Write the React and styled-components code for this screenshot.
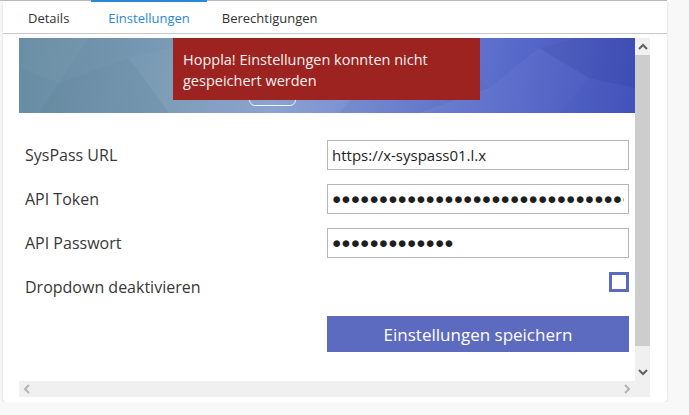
import React from 'react';
import styled, { createGlobalStyle } from 'styled-components';

const GlobalStyle = createGlobalStyle`
  html, body {
    margin: 0;
    padding: 0;
    background: #f8f8f8;
  }
  body {
    font-family: "Open Sans", "Noto Sans", "Liberation Sans", sans-serif;
    color: #333;
  }
  * {
    box-sizing: border-box;
  }
`;

const fields = [
    { label: 'SysPass URL', value: 'https://x-syspass01.l.x' },
    { label: 'API Token', value: '●'.repeat(36), masked: true },
    { label: 'API Passwort', value: '●'.repeat(13), masked: true },
];

const Chevron = ({ dir, color }) => {
    const points = {
        up: '1,6 5,2 9,6',
        down: '1,2 5,6 9,2',
        left: '6,1 2,5 6,9',
        right: '2,1 6,5 2,9',
    }[dir];
    const vertical = dir === 'up' || dir === 'down';
    return (
        <svg width={vertical ? 10 : 8} height={vertical ? 8 : 10} viewBox={vertical ? '0 0 10 8' : '0 0 8 10'}>
            <polyline points={points} fill="none" stroke={color} strokeWidth="2" />
        </svg>
    );
};

const App = () => {
    return (
        <Frame>
            <GlobalStyle />
            <Card>
                <TabBar>
                    <Tab>Details</Tab>
                    <Tab active>Einstellungen</Tab>
                    <Tab>Berechtigungen</Tab>
                </TabBar>
                <Body>
                    <ScrollFrame>
                        <Viewport>
                            <Banner>
                                <Facets viewBox="0 0 616 75" preserveAspectRatio="none">
                                    <polygon points="0,0 70,0 40,45 0,30" fill="#ffffff" opacity="0.03" />
                                    <polygon points="40,45 110,20 150,75 20,75" fill="#000000" opacity="0.02" />
                                    <polygon points="110,20 190,0 230,40 150,75" fill="#ffffff" opacity="0.035" />
                                    <polygon points="230,40 300,0 360,30 320,75 150,75" fill="#ffffff" opacity="0.03" />
                                    <polygon points="360,30 430,0 470,50 400,75 320,75" fill="#000000" opacity="0.02" />
                                    <polygon points="470,50 520,10 570,40 540,75 400,75" fill="#ffffff" opacity="0.035" />
                                    <polygon points="520,10 560,0 616,0 616,50 570,40" fill="#000000" opacity="0.03" />
                                    <polygon points="570,40 616,50 616,75 540,75" fill="#ffffff" opacity="0.02" />
                                </Facets>
                                <BannerButton />
                            </Banner>
                            <Toast>Hoppla! Einstellungen konnten nicht gespeichert werden</Toast>
                            <Form>
                                {fields.map((f) => (
                                    <React.Fragment key={f.label}>
                                        <Label>{f.label}</Label>
                                        <Input type="text" readOnly value={f.value} masked={f.masked} />
                                    </React.Fragment>
                                ))}
                                <Label>Dropdown deaktivieren</Label>
                                <Checkbox />
                                <SaveButton>Einstellungen speichern</SaveButton>
                            </Form>
                        </Viewport>
                        <VTrack>
                            <ArrowButton tall="17px">
                                <Chevron dir="up" color="#606060" />
                            </ArrowButton>
                            <Thumb />
                            <Spacer />
                            <ArrowButton tall="18px">
                                <Chevron dir="down" color="#606060" />
                            </ArrowButton>
                            <Corner />
                        </VTrack>
                        <HTrack>
                            <ArrowButton wide="16px">
                                <Chevron dir="left" color="#b4b4b4" />
                            </ArrowButton>
                            <Spacer />
                            <ArrowButton wide="16px">
                                <Chevron dir="right" color="#b4b4b4" />
                            </ArrowButton>
                        </HTrack>
                    </ScrollFrame>
                </Body>
            </Card>
        </Frame>
    );
};

export default App;

const Frame = styled.div`
    width: 667px;
    border-top: 1px solid #bdbdbd;
`;

const Card = styled.div`
    margin-left: 3px;
    height: 401px;
    background: #fff;
    border-radius: 0 0 4px 4px;
    box-shadow: 0 1px 3px rgba(0, 0, 0, 0.12);
    display: flex;
    flex-direction: column;
`;

const TabBar = styled.div`
    height: 33px;
    border-bottom: 1px solid #c8c8c8;
    display: flex;
    padding-left: 8px;
`;

const Tab = styled.div`
    display: flex;
    align-items: center;
    padding: 0 17px;
    font-size: 13px;
    color: ${(p) => (p.active ? '#2b88d8' : '#333')};
    margin-top: -1px;
    border-top: 2px solid ${(p) => (p.active ? '#2b88d8' : 'transparent')};
    &:first-child {
        margin-right: 5px;
    }
    &:last-child {
        padding-left: 15px;
    }
`;

const Body = styled.div`
    flex: 1;
    padding: 4px 17px 5px 16px;
`;

const ScrollFrame = styled.div`
    height: 359px;
    display: grid;
    grid-template-columns: 1fr 15px;
    grid-template-rows: 1fr 16px;
`;

const Viewport = styled.div`
    position: relative;
    overflow: hidden;
`;

const Banner = styled.div`
    height: 75px;
    display: grid;
    background: linear-gradient(98deg, #668ca2 0%, #7a9ab5 25%, #88a0cf 42%, #6f82d2 62%, #5466c8 82%, #3f4fb8 100%);
`;

const Facets = styled.svg`
    grid-area: 1 / 1;
    width: 100%;
    height: 100%;
`;

const BannerButton = styled.div`
    grid-area: 1 / 1;
    align-self: end;
    justify-self: start;
    margin: 0 0 7px 230px;
    width: 47px;
    height: 30px;
    border: 1.5px solid rgba(255, 255, 255, 0.85);
    border-radius: 6px;
`;

const Toast = styled.div`
    position: absolute;
    top: 0;
    left: 154px;
    width: 307px;
    height: 62px;
    padding: 11px 10px;
    background: #9c2320;
    color: #f7f1f1;
    font-size: 14.5px;
    line-height: 21px;
`;

const Form = styled.div`
    display: grid;
    grid-template-columns: 1fr 1fr;
    grid-auto-rows: 30px;
    row-gap: 14px;
    padding: 27px 6px 0 6px;
`;

const Label = styled.div`
    align-self: center;
    font-size: 16px;
    line-height: 22px;
    color: #383838;
`;

const Input = styled.input`
    width: 100%;
    height: 30px;
    border: 1px solid #b5b5b5;
    padding: 0 4px;
    outline: none;
    font-family: ${(p) => (p.masked ? '"Liberation Sans", sans-serif' : '"Open Sans", "Noto Sans", sans-serif')};
    font-size: ${(p) => (p.masked ? '15.5px' : '15px')};
    color: #1e1e1e;
    background: #fff;
`;

const Checkbox = styled.div`
    justify-self: end;
    align-self: start;
    width: 20px;
    height: 20px;
    border: 3px solid #5c6bc0;
    background: #fff;
`;

const SaveButton = styled.button`
    grid-column: 2;
    height: 36px;
    border: none;
    background: #5c6bc0;
    color: #fff;
    font-family: "Open Sans", "Noto Sans", sans-serif;
    font-size: 17px;
`;

const VTrack = styled.div`
    grid-column: 2;
    grid-row: 1 / 3;
    background: #f0f0f0;
    display: flex;
    flex-direction: column;
`;

const HTrack = styled.div`
    grid-column: 1;
    grid-row: 2;
    background: #f0f0f0;
    display: flex;
`;

const ArrowButton = styled.div`
    flex: none;
    height: ${(p) => p.tall || 'auto'};
    width: ${(p) => p.wide || 'auto'};
    display: flex;
    align-items: center;
    justify-content: center;
`;

const Thumb = styled.div`
    flex: none;
    height: 291px;
    background: #cdcdcd;
`;

const Spacer = styled.div`
    flex: 1;
`;

const Corner = styled.div`
    flex: none;
    height: 16px;
`;
